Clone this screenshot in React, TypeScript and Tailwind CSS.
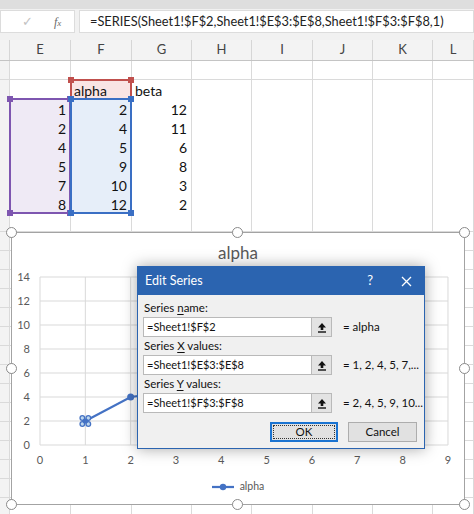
import React from "react";

const HEADERS = ["", "E", "F", "G", "H", "I", "J", "K", "L"];
const E_VALS = [1, 2, 4, 5, 7, 8];
const F_VALS = [2, 4, 5, 9, 10, 12];
const G_VALS = [12, 11, 6, 8, 3, 2];
const ROW_COUNT = 24;

const rowGrid = "grid grid-cols-[10px_61px_61px_60px_60px_61px_60px_60px_41px]";

function cellFill(row: number, col: number): string {
  if (row === 2 && col === 2) return "bg-[#f9e4e4]";
  if (row >= 3 && row <= 8 && col === 1) return "bg-[#efeaf5]";
  if (row >= 3 && row <= 8 && col === 2) return "bg-[#e6eef9]";
  return "bg-white";
}

function cellText(row: number, col: number): { text: string; left?: boolean } | null {
  if (row === 2 && col === 2) return { text: "alpha", left: true };
  if (row === 2 && col === 3) return { text: "beta", left: true };
  if (row >= 3 && row <= 8) {
    const i = row - 3;
    if (col === 1) return { text: String(E_VALS[i]) };
    if (col === 2) return { text: String(F_VALS[i]) };
    if (col === 3) return { text: String(G_VALS[i]) };
  }
  return null;
}

function FormulaBar() {
  return (
    <div className="h-[40px] bg-[#f1f1f1] border-t-[9px] border-[#dedede] flex items-start gap-[4px] pt-[1px]">
      <div className="w-[75px] h-[23px] bg-white border border-[#dcdcdc] flex items-center">
        <span className="ml-[21px] text-[13px] text-[#c2c2c2]">✓</span>
        <span className="ml-[21px] text-[12px] italic text-[#6a6a6a] font-['Liberation_Serif',serif]">
          f<span className="text-[9px]">x</span>
        </span>
      </div>
      <div className="flex-1 h-[23px] bg-white border border-[#dcdcdc] flex items-center pl-[10px] text-[12.8px] text-[#222]">
        =SERIES(Sheet1!$F$2,Sheet1!$E$3:$E$8,Sheet1!$F$3:$F$8,1)
      </div>
    </div>
  );
}

function Sheet() {
  const rows = Array.from({ length: ROW_COUNT }, (_, i) => i + 1);
  return (
    <div>
      <div className={`${rowGrid} h-[21px] bg-[#f3f3f3] border-b border-[#c4c4c4]`}>
        {HEADERS.map((h, i) => (
          <div
            key={i}
            className="border-r border-[#d6d6d6] flex items-center justify-center text-[13px] text-[#444]"
          >
            {h}
          </div>
        ))}
      </div>
      {rows.map((r) => (
        <div key={r} className={`${rowGrid} h-[19px]`}>
          {HEADERS.map((_, c) => {
            const t = cellText(r, c);
            return (
              <div
                key={c}
                className={`border-r border-b border-[#dadada] flex items-center text-[14px] text-[#111] ${
                  c === 0 ? "bg-[#f3f3f3]" : cellFill(r, c)
                } ${t?.left ? "justify-start pl-[3px]" : "justify-end pr-[4px]"}`}
              >
                {t?.text}
              </div>
            );
          })}
        </div>
      ))}
    </div>
  );
}

function RangeBox({ className, handle }: { className: string; handle: string }) {
  return (
    <div className={`absolute border-2 ${className}`}>
      <span className={`absolute -left-[4px] -top-[4px] w-[6px] h-[6px] ${handle}`} />
      <span className={`absolute -right-[4px] -top-[4px] w-[6px] h-[6px] ${handle}`} />
      <span className={`absolute -left-[4px] -bottom-[4px] w-[6px] h-[6px] ${handle}`} />
      <span className={`absolute -right-[4px] -bottom-[4px] w-[6px] h-[6px] ${handle}`} />
    </div>
  );
}

function Handle({ className }: { className: string }) {
  return (
    <span
      className={`absolute w-[11px] h-[11px] rounded-full bg-white border-[1.5px] border-[#8a8a8a] ${className}`}
    />
  );
}

// plot geometry, svg coordinates
const PX0 = 28;
const PXU = 45.33;
const PY0 = 178;
const PYU = 12;
const px = (x: number) => PX0 + x * PXU;
const py = (y: number) => PY0 - y * PYU;

function Chart() {
  const pts = E_VALS.map((x, i) => [px(x), py(F_VALS[i])]);
  return (
    <div className="absolute left-[11px] top-[232px] w-[454px] h-[273px] bg-white border border-[#a3a3a3] flex flex-col">
      <div className="h-[34px] flex items-end justify-center text-[17px] leading-[20px] text-[#595959] pb-[4px]">
        alpha
      </div>
      <svg width="452" height="206" className="block">
        {Array.from({ length: 8 }, (_, i) => (
          <line key={"h" + i} x1={px(0)} x2={px(9)} y1={py(i * 2)} y2={py(i * 2)} stroke="#d9d9d9" strokeWidth="1" />
        ))}
        {Array.from({ length: 10 }, (_, i) => (
          <line key={"v" + i} x1={px(i)} x2={px(i)} y1={py(0)} y2={py(14)} stroke="#d9d9d9" strokeWidth="1" />
        ))}
        {Array.from({ length: 8 }, (_, i) => (
          <text
            key={"yl" + i}
            x={18}
            y={py(i * 2) + 4}
            textAnchor="end"
            fontSize="11"
            fill="#595959"
            fontFamily="Lato, sans-serif"
          >
            {i * 2}
          </text>
        ))}
        {Array.from({ length: 10 }, (_, i) => (
          <text
            key={"xl" + i}
            x={px(i)}
            y={197}
            textAnchor="middle"
            fontSize="11"
            fill="#595959"
            fontFamily="Lato, sans-serif"
          >
            {i}
          </text>
        ))}
        <polyline
          points={pts.map((p) => p.join(",")).join(" ")}
          fill="none"
          stroke="#4472c4"
          strokeWidth="2.25"
        />
        {pts.slice(1).map((p, i) => (
          <circle key={i} cx={p[0]} cy={p[1]} r="3.5" fill="#4472c4" />
        ))}
        <g>
          {[
            [-3, -3],
            [3, -3],
            [-3, 3],
            [3, 3],
          ].map(([dx, dy], i) => (
            <circle
              key={i}
              cx={pts[0][0] + dx}
              cy={pts[0][1] + dy}
              r="2.3"
              fill="#bdd7ee"
              stroke="#4472c4"
              strokeWidth="1.3"
            />
          ))}
          <circle cx={pts[0][0]} cy={pts[0][1]} r="2.6" fill="#4472c4" />
        </g>
      </svg>
      <div className="flex-1 flex items-center justify-center gap-[6px] pb-[4px]">
        <svg width="22" height="8">
          <line x1="0" y1="4" x2="22" y2="4" stroke="#4472c4" strokeWidth="2.25" />
          <circle cx="11" cy="4" r="3.2" fill="#4472c4" />
        </svg>
        <span className="text-[10.5px] text-[#595959]">alpha</span>
      </div>
      <Handle className="-left-[6px] -top-[6px]" />
      <Handle className="left-[220px] -top-[6px]" />
      <Handle className="-right-[6px] -top-[6px]" />
      <Handle className="-left-[6px] top-[130px]" />
      <Handle className="-right-[6px] top-[130px]" />
      <Handle className="-left-[6px] -bottom-[6px]" />
      <Handle className="left-[220px] -bottom-[6px]" />
      <Handle className="-right-[6px] -bottom-[6px]" />
    </div>
  );
}

function RefIcon() {
  return (
    <svg width="10" height="11" viewBox="0 0 10 11">
      <path d="M5 1 L9 5.5 L6.3 5.5 L6.3 8 L3.7 8 L3.7 5.5 L1 5.5 Z" fill="#111" />
      <rect x="1" y="9.3" width="8" height="1.4" fill="#111" />
    </svg>
  );
}

function RefField({
  label,
  value,
  preview,
}: {
  label: [string, string, string];
  value: string;
  preview: string;
}) {
  return (
    <div>
      <div className="h-[18px] leading-[18px] pl-[6px] text-[11.5px] text-[#111] whitespace-pre">
        {label[0]}
        <span className="underline underline-offset-[2px]">{label[1]}</span>
        {label[2]}
      </div>
      <div className="h-[20px] flex items-center pl-[5px]">
        <div className="w-[189px] h-[20px] bg-white border border-[#b9b9b9] flex items-stretch">
          <div className="flex-1 flex items-center pl-[3px] text-[11px] text-[#111]">{value}</div>
          <div className="w-[20px] bg-[#e3e3e3] border-l border-[#b9b9b9] flex items-center justify-center">
            <RefIcon />
          </div>
        </div>
        <div className="ml-[11px] text-[11.5px] text-[#111] whitespace-nowrap">{preview}</div>
      </div>
    </div>
  );
}

function EditSeriesDialog() {
  return (
    <div className="absolute left-[137px] top-[266px] w-[288px] h-[183px] bg-[#f0f0f0] border border-[#2b64b0] shadow-[0_0_14px_rgba(0,0,0,0.35)] flex flex-col">
      <div className="h-[28px] bg-[#2b64b0] flex items-center text-white">
        <span className="ml-[7px] text-[12.5px]">Edit Series</span>
        <span className="ml-auto mr-[28px] text-[13px]">?</span>
        <svg width="11" height="11" viewBox="0 0 11 11" className="mr-[12px]">
          <path d="M1 1 L10 10 M10 1 L1 10" stroke="#fff" strokeWidth="1.3" />
        </svg>
      </div>
      <div className="pt-[4px]">
        <RefField label={["Series ", "n", "ame:"]} value="=Sheet1!$F$2" preview="= alpha" />
        <RefField label={["Series ", "X", " values:"]} value="=Sheet1!$E$3:$E$8" preview="= 1, 2, 4, 5, 7,..." />
        <RefField label={["Series ", "Y", " values:"]} value="=Sheet1!$F$3:$F$8" preview="= 2, 4, 5, 9, 10..." />
      </div>
      <div className="mt-[9px] flex justify-end gap-[10px] pr-[7px]">
        <button className="w-[68px] h-[20px] bg-[#e1e1e1] border-2 border-[#1a73d1] p-[1px] text-[11.5px] text-[#111]">
          <div className="w-full h-full border border-dotted border-[#333] flex items-center justify-center">OK</div>
        </button>
        <button className="w-[69px] h-[20px] bg-[#e1e1e1] border border-[#adadad] text-[11.5px] text-[#111] flex items-center justify-center">
          Cancel
        </button>
      </div>
    </div>
  );
}

export default function App() {
  return (
    <div className="relative w-[474px] h-[514px] overflow-hidden bg-white font-['Lato',sans-serif]">
      <FormulaBar />
      <Sheet />
      <RangeBox className="left-[70px] top-[79px] w-[62px] h-[21px] border-[#c0504d]" handle="bg-[#c0504d]" />
      <RangeBox className="left-[9px] top-[98px] w-[62px] h-[116px] border-[#7e56b0]" handle="bg-[#7e56b0]" />
      <RangeBox className="left-[70px] top-[98px] w-[62px] h-[116px] border-[#3a6fc4]" handle="bg-[#3a6fc4]" />
      <Chart />
      <EditSeriesDialog />
    </div>
  );
}
